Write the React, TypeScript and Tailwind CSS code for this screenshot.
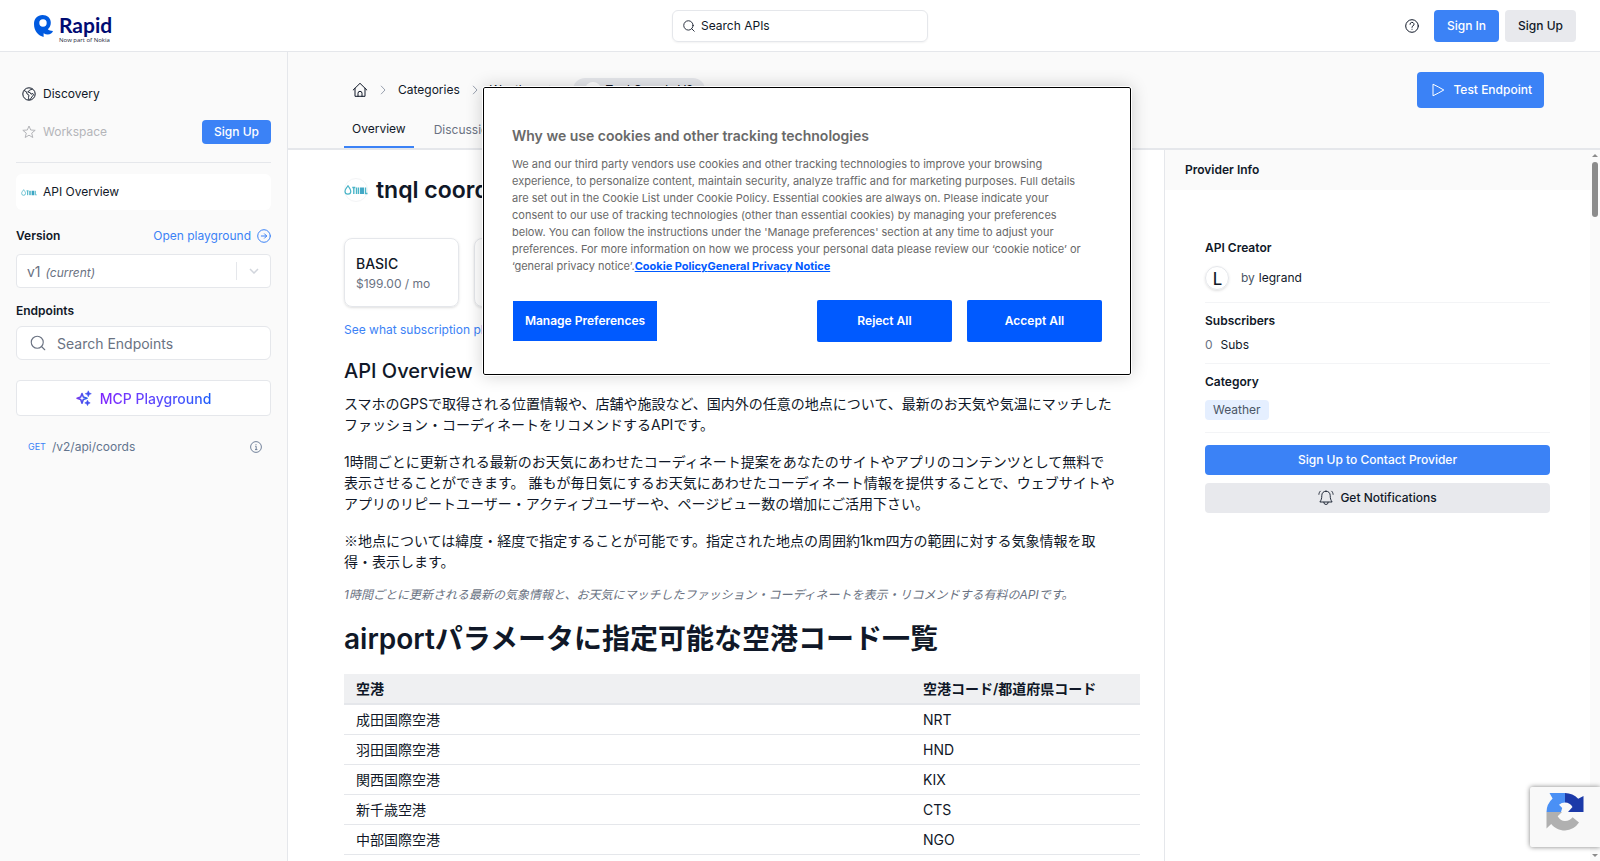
import React, { useState } from 'react';
import { Search } from 'lucide-react';

interface Airport {
  name: string;
  code: string;
}

const airports: Airport[] = [
  { name: '成田国際空港', code: 'NRT' },
  { name: '羽田国際空港', code: 'HND' },
  { name: '関西国際空港', code: 'KIX' },
  { name: '新千歳空港', code: 'CTS' },
  { name: '中部国際空港', code: 'NGO' },
];

const RapidLogo: React.FC = () => (
  <a href="#home" aria-label="Rapid" className="ml-[10px] flex gap-[6px]">
    <svg viewBox="0 0 19 22" className="h-[22px] w-[19px]" fill="#005ae0">
      <path
        fillRule="evenodd"
        d="M8.500 0C13.200 0 16.800 3 16.800 7.800c0 2.900-1.200 5.200-3 6.500 1.200 1.200 2.900 1.700 5.200 1.700-.8 2.200-2.700 3.500-5.200 3.500-1.500 0-2.900-.4-4.200-1.200V22C4.500 20.500 0 16.500 0 9 0 3.600 3.500 0 8.500 0Zm.5 4.300a3.700 3.700 0 1 0 0 7.400 3.700 3.700 0 0 0 0-7.400Z"
      />
    </svg>
    <span className="flex flex-col text-[#000b72]">
      <span className="font-['Lato'] text-[21px] leading-5 font-bold">Rapid</span>
      <span className="font-['Open_Sans'] text-[6px] leading-[10px] text-gray-800">Now part of Nokia</span>
    </span>
  </a>
);

const BrandMark: React.FC<{ className: string }> = ({ className }) => (
  <svg viewBox="0 0 24 10" className={className} fill="none" stroke="#4bb5c8" aria-hidden="true">
    <path d="M4 .8C3 2.600 1 4 1 6.300a2.900 2.900 0 0 0 5.800 0C6.800 4 5 2.600 4 .8Z" strokeWidth="1.200" />
    <path d="M8.300 2.500h3M9.800 2.500V9M12.500 9V2.500M14.500 2.500V9" strokeWidth="1.400" />
    <path d="M17 2.500V9M19 2.500V9" strokeWidth="1.800" stroke="#2f9fc0" />
    <path d="M21.500 2.500v6h2" strokeWidth="1.400" />
  </svg>
);

const GlobeIcon: React.FC = () => (
  <svg viewBox="0 0 14 14" className="size-[14px]" fill="none" stroke="currentColor" strokeLinejoin="round" aria-hidden="true">
    <circle cx="7" cy="7" r="6.200" />
    <path d="M2 3.500l2.500 1.300.6 2.200 1.900 1.200-.5 2.300.5 2.500M10.500 2 7.500 3.200 5.800 5l2.300.5L9 7.200l1.800-.7.8 1.300-1.800 2.200L8 12.800" strokeWidth=".9" />
  </svg>
);

const StarIcon: React.FC = () => (
  <svg viewBox="0 0 14 14" className="size-[14px]" fill="none" stroke="currentColor" strokeLinejoin="round" aria-hidden="true">
    <path d="M7 1l1.700 4 4.500.3-3.500 2.800 1.100 4.400L7 10.200l-3.800 2.300 1.100-4.400L.8 5.300l4.500-.3z" />
  </svg>
);

const HomeIcon: React.FC = () => (
  <svg viewBox="0 0 16 16" className="size-4" fill="none" stroke="currentColor" strokeLinecap="round" strokeLinejoin="round" aria-hidden="true">
    <path d="M1.200 8 8 1.300 14.800 8M3 6.300V14.300h10V6.300M6 14.300v-3a2 2 0 0 1 4 0v3" />
  </svg>
);

const ChevronIcon: React.FC = () => (
  <svg viewBox="0 0 6 10" className="h-[10px] w-[6px] text-gray-400" fill="none" stroke="currentColor" aria-hidden="true">
    <path d="M1 .8 5 5 1 9.200" />
  </svg>
);

const HelpIcon: React.FC = () => (
  <svg viewBox="0 0 14 14" className="size-[14px]" fill="none" stroke="currentColor" strokeLinecap="round" aria-hidden="true">
    <circle cx="7" cy="7" r="6.300" />
    <path d="M5 5.300a2 1.900 0 1 1 3 1.600c-.7.400-1 .7-1 1.400M7 10.200v.1" />
  </svg>
);

const InfoIcon: React.FC = () => (
  <svg viewBox="0 0 12 12" className="size-3 text-slate-500" fill="none" stroke="currentColor" aria-hidden="true">
    <circle cx="6" cy="6" r="5.400" strokeWidth=".9" />
    <path d="M5.200 5.300H6.200V8.500M5 8.600h2.400M6 3.200v1" strokeWidth=".9" />
  </svg>
);

const ArrowCircleIcon: React.FC = () => (
  <svg viewBox="0 0 14 14" className="size-[14px]" fill="none" stroke="currentColor" strokeLinecap="round" strokeLinejoin="round" aria-hidden="true">
    <circle cx="7" cy="7" r="6.300" />
    <path d="M4.300 7h5.300M7.500 4.800 9.700 7 7.500 9.200" />
  </svg>
);

const SparklesIcon: React.FC = () => (
  <svg viewBox="0 0 16 16" className="size-4" aria-hidden="true">
    <defs>
      <linearGradient id="spark" x1="0" x2="1">
        <stop offset="0" stopColor="#7c3aed" />
        <stop offset="1" stopColor="#2563eb" />
      </linearGradient>
    </defs>
    <path
      d="M6 3.500 7.300 7 11 8.300 7.300 9.600 6 13.200 4.700 9.600 1.100 8.300 4.700 7z"
      fill="none"
      stroke="url(#spark)"
      strokeWidth="1.600"
      strokeLinejoin="round"
    />
    <path d="M12.300.8l.9 2.100 2.100.8-2.100.9-.9 2.100-.9-2.100-2.100-.9 2.100-.8zM11.500 10.200l.8 1.900 1.900.8-1.900.8-.8 1.900-.8-1.900-1.900-.8 1.900-.8z" fill="#3f4df0" stroke="#3f4df0" strokeWidth=".6" />
  </svg>
);

const PlayIcon: React.FC = () => (
  <svg viewBox="0 0 14 14" className="size-[14px]" fill="none" stroke="currentColor" strokeLinejoin="round" aria-hidden="true">
    <path d="M2 1.200v11.600c3.600-1.700 7-3.600 10.800-5.800C9 4.800 5.600 2.900 2 1.200Z" />
  </svg>
);

const BellIcon: React.FC = () => (
  <svg viewBox="0 0 16 16" className="size-4" fill="none" stroke="currentColor" strokeLinecap="round" strokeLinejoin="round" aria-hidden="true">
    <path d="M8 1.200c-2.700 0-4.200 1.900-4.200 4.300 0 3-.6 4.600-1.900 6.500h12.200c-1.300-1.900-1.900-3.500-1.900-6.500 0-2.400-1.500-4.300-4.200-4.300ZM5.800 12.300a2.200 2.200 0 0 0 4.400 0M.9 4.300C1 3 1.500 2 2.300 1.200M15.100 4.300C15 3 14.500 2 13.700 1.200" strokeWidth=".9" />
  </svg>
);

const RecaptchaIcon: React.FC = () => (
  <svg viewBox="0 0 38 38" className="size-[38px]" aria-hidden="true">
    <path d="M19 0v9.500a10 10 0 0 0-6 2.200L16.200 15 15 19H.5A18.500 18.500 0 0 1 6.600 5.400L3.500 0z" fill="#4a90f5" />
    <path d="M19 0c5.200 0 9.800 2.100 13.200 5.700L37.500 3v16H22l4.500-5a9 9 0 0 0-7.500-4.500z" fill="#1c3aa9" />
    <path d="M.5 19H16l-4.300 4.300c1.600 3 4.200 4.700 7.300 4.700 3.300 0 5.800-1.600 7.600-3.800l6.400 5.400A18 18 0 0 1 19 37.600c-5.700 0-10.500-2.500-13.800-6.500L.5 35.500z" fill="#b0b0b0" />
  </svg>
);

const Header: React.FC = () => (
  <header className="flex h-[52px] shrink-0 items-center justify-between border-b border-gray-200 bg-white px-6">
    <div className="flex flex-1 items-center pt-2">
      <RapidLogo />
    </div>
    <button type="button" className="flex h-8 w-64 items-center gap-[5px] rounded-md border border-gray-200 px-[9px] text-[12px] shadow-xs">
      <Search className="size-[14px]" strokeWidth={1.5} />
      Search APIs
    </button>
    <div className="flex flex-1 items-center justify-end gap-[6px]">
      <button type="button" aria-label="Help" className="mr-[9px]">
        <HelpIcon />
      </button>
      <button type="button" className="h-8 rounded bg-[#3b82f6] px-[13px] text-[12px] font-medium text-white">Sign In</button>
      <button type="button" className="h-8 rounded bg-[#e8e9ed] px-[13px] text-[12px] font-medium">Sign Up</button>
    </div>
  </header>
);

const Sidebar: React.FC = () => {
  const [query, setQuery] = useState('');

  return (
    <aside className="flex w-72 shrink-0 flex-col border-r border-gray-200 bg-[#fafafa] px-4 pt-6 text-[12px]">
      <nav className="flex flex-col">
        <a href="#discovery" className="flex h-9 items-center gap-[7px] pl-[6px]">
          <GlobeIcon />
          Discovery
        </a>
        <div className="flex h-10 items-center justify-between pl-[6px]">
          <span className="flex items-center gap-[7px] text-[#b4b5b9]">
            <StarIcon />
            Workspace
          </span>
          <button type="button" className="h-6 rounded-sm bg-[#3b82f6] px-3 font-medium text-white">Sign Up</button>
        </div>
        <hr className="mt-[10px] border-gray-200" />
        <a href="#overview" className="mt-[11px] flex h-9 items-center gap-[6px] rounded-md bg-white pl-[5px]">
          <BrandMark className="h-[7px] w-4" />
          API Overview
        </a>
      </nav>

      <div className="mt-4 flex h-5 items-center justify-between">
        <label htmlFor="version" className="font-semibold">Version</label>
        <a href="#playground" className="flex items-center gap-[6px] text-[#3b82f6]">
          Open playground
          <ArrowCircleIcon />
        </a>
      </div>
      <button id="version" type="button" className="mt-2 flex h-[34px] items-center rounded border border-gray-200 bg-white pl-[10px] text-[14px] text-gray-500">
        <span>
          v1
          <i className="ml-[5px] text-[12px]">(current)</i>
        </span>
        <span className="ml-auto h-[18px] w-px bg-gray-200" />
        <svg viewBox="0 0 10 6" className="mr-[11px] ml-3 h-[6px] w-[10px] text-gray-300" fill="none" stroke="currentColor" strokeWidth="1.500" aria-hidden="true">
          <path d="M1 1l4 4 4-4" />
        </svg>
      </button>

      <label htmlFor="endpoints" className="mt-[13px] leading-5 font-semibold">Endpoints</label>
      <div className="mt-[5px] flex h-[34px] items-center gap-[10px] rounded-md border border-gray-200 bg-white px-3">
        <Search className="size-[18px] text-gray-500" strokeWidth={1.5} />
        <input
          id="endpoints"
          type="text"
          placeholder="Search Endpoints"
          value={query}
          onChange={(e) => setQuery(e.target.value)}
          className="min-w-0 flex-1 text-[14px] outline-none placeholder:text-gray-500"
        />
      </div>
      <button type="button" className="mt-5 flex h-9 items-center justify-center gap-2 rounded border border-gray-200 bg-white text-[14px] font-medium">
        <SparklesIcon />
        <span className="bg-linear-to-r from-violet-600 to-blue-600 bg-clip-text text-transparent">MCP Playground</span>
      </button>
      <a href="#coords" className="mt-[21px] flex h-5 items-center pr-[9px] pl-3 text-slate-500">
        <span className="mr-[6px] text-[9px] text-[#3b82f6]">GET</span>
        /v2/api/coords
        <span className="ml-auto"><InfoIcon /></span>
      </a>
    </aside>
  );
};

const PageHeader: React.FC = () => (
  <div className="shrink-0 border-b-2 border-gray-200 bg-[#fafafa] px-14">
    <div className="flex h-14 items-end justify-between">
      <nav aria-label="Breadcrumb" className="flex h-9 items-center gap-3 pl-2 text-[12px]">
        <a href="#home" aria-label="Home"><HomeIcon /></a>
        <ChevronIcon />
        <a href="#categories">Categories</a>
        <ChevronIcon />
        <a href="#weather">Weather</a>
        <ChevronIcon />
        <span className="ml-[6px] flex h-6 items-center gap-1 rounded-full bg-gray-200 px-3">
          <span className="size-4 rounded-full bg-white" />
          Tnql Coords V2
        </span>
      </nav>
      <button type="button" className="flex h-9 items-center gap-2 rounded bg-[#3b82f6] px-3 text-[12px] font-medium text-white">
        <span className="ml-[2px]"><PlayIcon /></span>
        Test Endpoint
      </button>
    </div>
    <div className="flex h-10 items-end gap-3 text-[12px]">
      <a href="#overview" className="flex h-9 items-center border-b-2 border-[#3b82f6] px-2">Overview</a>
      <a href="#discussions" className="flex h-9 items-center px-2 text-gray-500">Discussions</a>
    </div>
  </div>
);

const ApiContent: React.FC = () => (
  <main className="min-w-0 flex-1 overflow-hidden px-14 pt-6 pr-6">
    <div className="flex items-center gap-2">
      <span className="flex size-6 items-center justify-center rounded-full border border-gray-100">
        <BrandMark className="h-[10px] w-6 shrink-0" />
      </span>
      <h1 className="text-[23px] leading-8 font-semibold">tnql coords v2</h1>
    </div>

    <div className="mt-8 flex gap-[15px]">
      <div className="flex h-[69px] w-[115px] flex-col justify-center rounded-lg border border-gray-200 px-[11px] pt-[2px] shadow-sm">
        <span className="text-[14px] leading-5 font-medium">BASIC</span>
        <span className="text-[12px] leading-5 text-gray-500">$199.00 / mo</span>
      </div>
      <div className="h-[69px] w-[115px] rounded-lg border border-gray-200 shadow-sm" />
    </div>
    <a href="#pricing" className="mt-[13px] block text-[12px] leading-5 text-[#3b82f6]">See what subscription plan is right for you</a>

    <h2 className="mt-[15px] text-xl leading-8 font-medium">API Overview</h2>
    <div className="mt-[6px] flex flex-col gap-4 text-[14px] leading-[21px]">
      <p>
        スマホのGPSで取得される位置情報や、店舗や施設など、国内外の任意の地点について、最新のお天気や気温にマッチした
        <br />
        ファッション・コーディネートをリコメンドするAPIです。
      </p>
      <p>
        1時間ごとに更新される最新のお天気にあわせたコーディネート提案をあなたのサイトやアプリのコンテンツとして無料で
        <br />
        表示させることができます。 誰もが毎日気にするお天気にあわせたコーディネート情報を提供することで、ウェブサイトや
        <br />
        アプリのリピートユーザー・アクティブユーザーや、ページビュー数の増加にご活用下さい。
      </p>
      <p>
        <span className="font-['Noto_Sans_CJK_JP',sans-serif]">※</span>
        地点については緯度・経度で指定することが可能です。指定された地点の周囲約1km四方の範囲に対する気象情報を取
        <br />
        得・表示します。
      </p>
    </div>
    <p className="mt-[13px] text-[12px] leading-5 text-gray-500 italic">
      1時間ごとに更新される最新の気象情報と、お天気にマッチしたファッション・コーディネートを表示・リコメンドする有料のAPIです。
    </p>

    <h2 className="mt-[14px] text-[28px] leading-10 font-semibold">airportパラメータに指定可能な空港コード一覧</h2>
    <table className="mt-[15px] w-full text-left text-[14px]">
      <thead>
        <tr className="h-[30px] border-b-2 border-gray-200 bg-[#eff0f2]">
          <th className="px-3 font-semibold">空港</th>
          <th className="w-[229px] px-3 font-semibold whitespace-nowrap">空港コード/都道府県コード</th>
        </tr>
      </thead>
      <tbody>
        {airports.map((airport) => (
          <tr key={airport.code} className="h-[30px] border-b border-gray-200">
            <td className="px-3">{airport.name}</td>
            <td className="px-3">{airport.code}</td>
          </tr>
        ))}
      </tbody>
    </table>
  </main>
);

const ProviderPanel: React.FC = () => (
  <aside className="w-[426px] shrink-0 border-l border-gray-200 text-[12px]">
    <h3 className="flex h-10 items-center bg-[#fafafa] px-5 font-semibold">Provider Info</h3>
    <div className="flex flex-col px-10 pt-12">
      <section className="border-b border-gray-100 pb-3">
        <h4 className="leading-5 font-semibold">API Creator</h4>
        <div className="mt-2 flex items-center gap-3">
          <span className="flex size-6 items-center justify-center rounded-full border border-gray-200 font-['Lato'] text-[18px] shadow-sm">L</span>
          <span className="flex gap-1 text-gray-600">
            by
            <a href="#legrand" className="text-gray-900">legrand</a>
          </span>
        </div>
      </section>
      <section className="border-b border-gray-100 py-2">
        <h4 className="leading-5 font-semibold">Subscribers</h4>
        <p className="mt-1 flex gap-2 leading-5">
          <span className="text-gray-500">0</span>
          Subs
        </p>
      </section>
      <section className="border-b border-gray-100 pt-2 pb-3">
        <h4 className="leading-5 font-semibold">Category</h4>
        <a href="#weather" className="mt-2 block w-fit rounded-sm bg-[#e5efff] px-2 leading-5 text-gray-600">Weather</a>
      </section>
      <button type="button" className="mt-3 h-[30px] rounded bg-[#3b82f6] font-medium text-white">Sign Up to Contact Provider</button>
      <button type="button" className="mt-2 flex h-[30px] items-center justify-center gap-[6px] rounded bg-[#e8e9ed] font-medium">
        <BellIcon />
        Get Notifications
      </button>
    </div>
  </aside>
);

const Scrollbar: React.FC = () => (
  <div className="flex w-[10px] shrink-0 flex-col items-center bg-[#fafafa] pt-1 pb-1" aria-hidden="true">
    <svg viewBox="0 0 6 3" className="h-[3px] w-[6px]" fill="#8b8b8b"><path d="M0 3 3 0l3 3z" /></svg>
    <div className="mt-[5px] h-[55px] w-[6px] rounded-full bg-[#8b8b8b]" />
    <svg viewBox="0 0 6 3" className="mt-auto h-[3px] w-[6px]" fill="#8b8b8b"><path d="M0 0l3 3 3-3z" /></svg>
  </div>
);

const CookieDialog: React.FC = () => (
  <div
    role="dialog"
    aria-labelledby="cookie-title"
    className="absolute top-[87px] left-1/2 w-[648px] -ml-[317px] rounded-xs border border-black bg-white px-7 pt-9 pb-8 text-[#696969] shadow-[0_0_18px_rgba(0,0,0,0.2)] outline-1 outline-white"
  >
    <h2 id="cookie-title" className="text-[14px] leading-6 font-semibold">Why we use cookies and other tracking technologies</h2>
    <p className="mt-2 pr-5 text-[11px] leading-[17px]">
      We and our third party vendors use cookies and other tracking technologies to improve your browsing experience, to personalize content, maintain security, analyze traffic and for marketing purposes. Full details are set out in the Cookie List under Cookie Policy. Essential cookies are always on. Please indicate your consent to our use of tracking technologies (other than essential cookies) by managing your preferences below. You can follow the instructions under the 'Manage preferences' section at any time to adjust your preferences. For more information on how we process your personal data please review our ‘cookie notice’ or ‘general privacy notice’.
      <a href="#cookies" className="font-bold text-[#005aff] underline">Cookie Policy</a>
      <a href="#privacy" className="font-bold text-[#005aff] underline">General Privacy Notice</a>
    </p>
    <div className="mt-[25px] flex items-center gap-[15px] text-[12px] font-semibold text-white">
      <button type="button" className="mr-auto ml-px h-10 w-36 bg-[#005aff]">Manage Preferences</button>
      <button type="button" className="h-[42px] w-[135px] rounded-xs bg-[#005aff]">Reject All</button>
      <button type="button" className="h-[42px] w-[135px] rounded-xs bg-[#005aff]">Accept All</button>
    </div>
  </div>
);

const App: React.FC = () => {
  return (
    <div className="relative flex h-screen flex-col overflow-hidden bg-white font-['Inter','Noto_Sans_CJK_JP',sans-serif] text-gray-900">
      <Header />
      <div className="flex min-h-0 flex-1">
        <Sidebar />
        <div className="flex min-w-0 flex-1 flex-col">
          <PageHeader />
          <div className="flex min-h-0 flex-1">
            <ApiContent />
            <ProviderPanel />
            <Scrollbar />
          </div>
        </div>
      </div>
      <CookieDialog />
      <div className="absolute right-0 bottom-[14px] flex h-[60px] w-[70px] justify-center rounded-l-xs bg-[#f9f9f9] pt-[6px] shadow-[0_0_5px_gray]">
        <RecaptchaIcon />
      </div>
    </div>
  );
};

export default App;
